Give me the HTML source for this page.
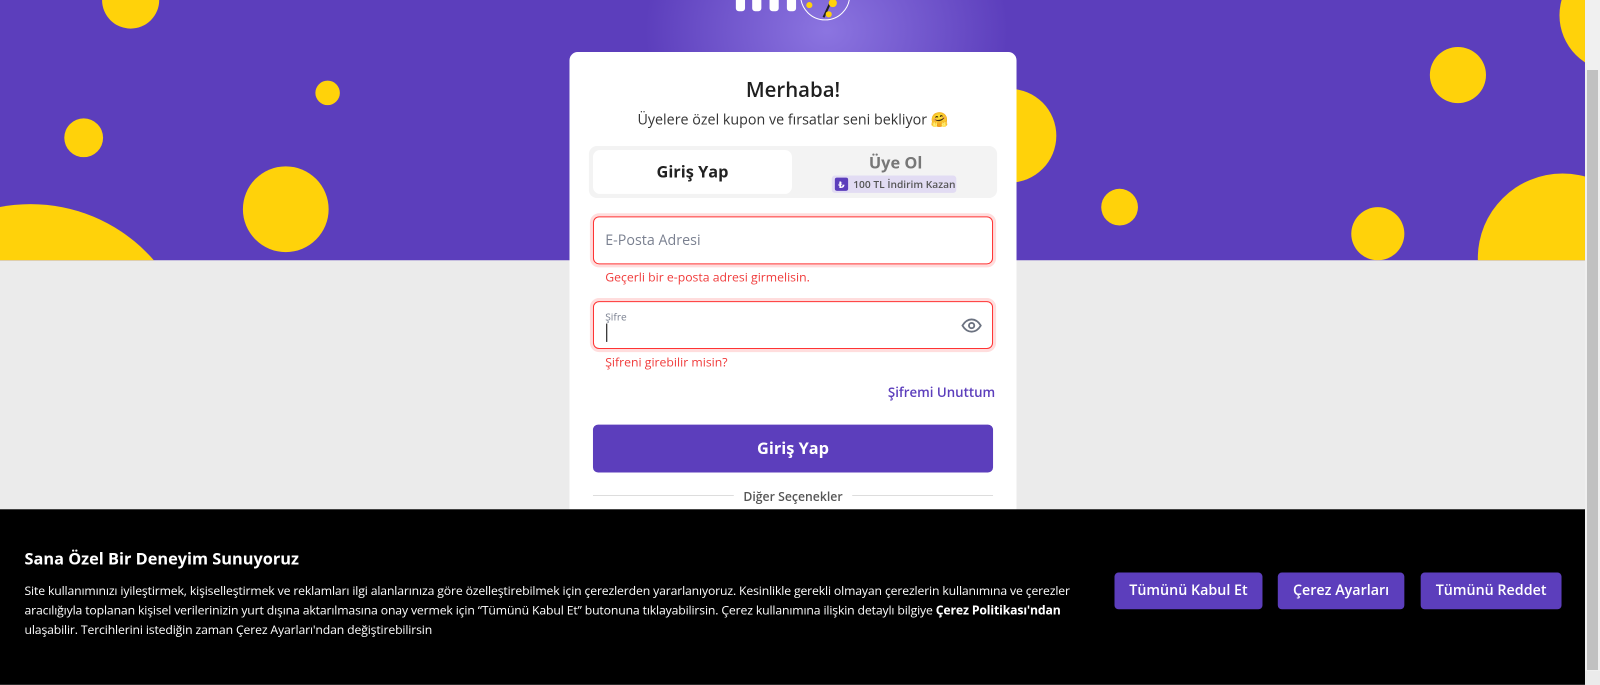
<!DOCTYPE html>
<html><head><meta charset="utf-8"><style>
*{margin:0;padding:0;box-sizing:border-box}
body{width:1600px;height:671px;overflow:hidden;background:#ebebeb;font-family:"Open Sans","Liberation Sans","DejaVu Sans",sans-serif;position:relative}
.wrap{position:absolute;left:0;top:0;width:1553px;height:660px;transform:scale(1.0206);transform-origin:0 0}
.top{position:absolute;left:0;top:0;width:1553px;height:255px;background:#5c3ebc;overflow:hidden}
.glow{position:absolute;left:630px;top:-120px;width:360px;height:300px;border-radius:50%;background:radial-gradient(ellipse at center,rgba(160,140,240,.7),rgba(92,62,188,0) 70%)}
.c{position:absolute;border-radius:50%;background:#ffd20a}
.sb{position:absolute;left:1585px;top:0;width:15px;height:671px;background:#f0f0f0}
.sb .th{position:absolute;left:2px;top:70px;width:11px;height:600px;background:#c1c1c1}
.card{position:absolute;left:558px;top:51px;width:438px;height:460px;background:#fff;border-radius:8px}
h1{position:absolute;top:74px;left:558px;width:438px;text-align:center;font-size:20px;font-weight:600;color:#1f1f1f}
.sub{position:absolute;top:108px;left:558px;width:438px;text-align:center;font-size:14px;color:#333}
.tabs{position:absolute;left:577px;top:143px;width:400px;height:51px;background:#f3f3f3;border-radius:8px}
.t1{position:absolute;left:581px;top:147px;width:195px;height:43px;background:#fff;border-radius:7px;text-align:center;line-height:43px;font-weight:700;font-size:16px;color:#222}
.t2{position:absolute;left:780px;top:147px;width:195px;text-align:center;font-weight:700;font-size:16px;color:#777}
.badge{position:absolute;left:815px;top:172px;width:122px;height:17px;background:#e2dcf3;border-radius:3px;font-size:10px;color:#555;line-height:17px;padding-left:21px;font-weight:600}
.badge i{position:absolute;left:3px;top:2px;width:13px;height:13px;background:#5c3ebc;border-radius:2px;color:#fff;font-style:normal;font-size:9px;line-height:13px;text-align:center}
.in{position:absolute;left:581px;width:392px;height:47px;border:1px solid #f33;border-radius:6px;box-shadow:0 0 0 3px #fdd;background:#fff}
.err{position:absolute;left:593px;font-size:12px;color:#f03a3a}
.btn{position:absolute;left:581px;top:416px;width:392px;height:47px;background:#5c3ebc;border-radius:5px;color:#fff;text-align:center;line-height:47px;font-weight:700;font-size:16px}
.ck{position:absolute;left:0;top:499px;width:1553px;height:172px;background:#000;color:#fff}
.ck h2{position:absolute;left:24px;top:37px;font-size:16px;font-weight:700}
.ck p{position:absolute;left:24px;top:70px;width:1045px;font-size:12px;line-height:19px;letter-spacing:-0.15px}
.cb{position:absolute;top:62px;height:36px;background:#5c3ebc;border-radius:4px;font-size:14px;line-height:36px;text-align:center;color:#fff;font-weight:600}
.bar{position:absolute;top:-10px;width:9px;height:21px;background:#fff;border-radius:3px}
</style></head><body>
<div class="wrap">
<div class="top">
<div class="glow"></div>
<div class="c" style="left:100px;top:-28px;width:56px;height:56px"></div>
<div class="c" style="left:309px;top:79px;width:24px;height:24px"></div>
<div class="c" style="left:63px;top:116px;width:38px;height:38px"></div>
<div class="c" style="left:238px;top:163px;width:84px;height:84px"></div>
<div class="c" style="left:-130px;top:200px;width:320px;height:320px"></div>
<div class="c" style="left:943px;top:87px;width:92px;height:92px"></div>
<div class="c" style="left:1401px;top:46px;width:55px;height:55px"></div>
<div class="c" style="left:1079px;top:185px;width:36px;height:36px"></div>
<div class="c" style="left:1324px;top:203px;width:52px;height:52px"></div>
<div class="c" style="left:1448px;top:170px;width:166px;height:166px"></div>
<div class="c" style="left:1528px;top:-40px;width:110px;height:110px"></div>
<div class="bar" style="left:721px"></div>
<div class="bar" style="left:737px"></div>
<div class="bar" style="left:754px"></div>
<div class="bar" style="left:771px"></div>
<div style="position:absolute;left:784px;top:-29px;width:49px;height:49px;border:1.5px solid #fff;border-radius:50%"></div>
<div style="position:absolute;left:811px;top:-6px;width:1.5px;height:24px;background:#222;transform:rotate(25deg)"></div>
<div class="c" style="left:790px;top:2px;width:6px;height:6px"></div>
<div class="c" style="left:812px;top:-1px;width:8px;height:8px"></div>
<div class="c" style="left:809px;top:11px;width:6px;height:6px"></div>
</div>
<div class="card"></div>
<h1>Merhaba!</h1>
<div class="sub">Üyelere özel kupon ve fırsatlar seni bekliyor 🤗</div>
<div class="tabs"></div>
<div class="t1">Giriş Yap</div>
<div class="t2" style="top:148px">Üye Ol</div>
<div class="badge"><i>₺</i>100 TL İndirim Kazan</div>
<div class="in" style="top:212px"><span style="position:absolute;left:11px;top:13px;font-size:14px;color:#7a8090">E-Posta Adresi</span></div>
<div class="err" style="top:263px">Geçerli bir e-posta adresi girmelisin.</div>
<div class="in" style="top:295px"><span style="position:absolute;left:11px;top:7px;font-size:10px;color:#7a8090">Şifre</span><span style="position:absolute;left:12px;top:21px;width:1px;height:18px;background:#000"></span>
<svg style="position:absolute;left:360px;top:16px" width="20" height="14" viewBox="0 0 20 14"><path d="M1 7C4 2 7 1 10 1s6 1 9 6c-3 5-6 6-9 6S4 12 1 7z" fill="none" stroke="#6b7280" stroke-width="1.8"/><circle cx="10" cy="7" r="2.6" fill="none" stroke="#6b7280" stroke-width="1.8"/></svg></div>
<div class="err" style="top:346px">Şifreni girebilir misin?</div>
<div style="position:absolute;left:870px;top:375px;font-size:13px;font-weight:600;color:#5c3ebc">Şifremi Unuttum</div>
<div class="btn">Giriş Yap</div>
<div style="position:absolute;left:581px;top:485px;width:138px;height:1px;background:#ddd"></div>
<div style="position:absolute;left:835px;top:485px;width:138px;height:1px;background:#ddd"></div>
<div style="position:absolute;left:719px;top:478px;width:116px;text-align:center;font-size:12px;font-weight:600;color:#555">Diğer Seçenekler</div>
<div class="ck">
<h2>Sana Özel Bir Deneyim Sunuyoruz</h2>
<p>Site kullanımınızı iyileştirmek, kişiselleştirmek ve reklamları ilgi alanlarınıza göre özelleştirebilmek için çerezlerden yararlanıyoruz. Kesinlikle gerekli olmayan çerezlerin kullanımına ve çerezler aracılığıyla toplanan kişisel verilerinizin yurt dışına aktarılmasına onay vermek için “Tümünü Kabul Et” butonuna tıklayabilirsin. Çerez kullanımına ilişkin detaylı bilgiye <b>Çerez Politikası'ndan</b> ulaşabilir. Tercihlerini istediğin zaman Çerez Ayarları'ndan değiştirebilirsin</p>
<div class="cb" style="left:1092px;width:145px">Tümünü Kabul Et</div>
<div class="cb" style="left:1252px;width:124px">Çerez Ayarları</div>
<div class="cb" style="left:1392px;width:138px">Tümünü Reddet</div>
</div>
</div>
<div class="sb"><div class="th"></div></div>
</body></html>
